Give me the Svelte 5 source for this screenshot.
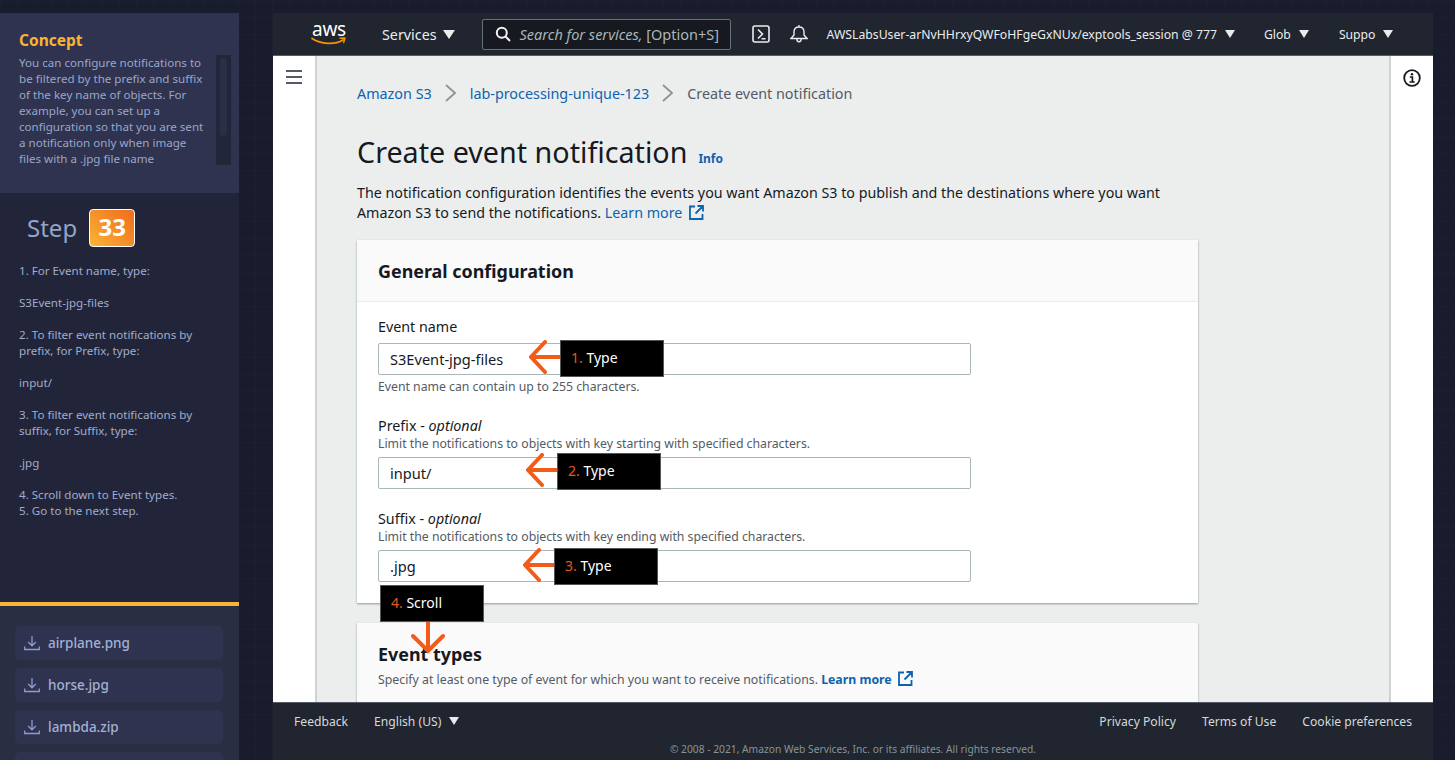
<script>
  const files = ['airplane.png', 'horse.jpg', 'lambda.zip', ''];

  const fields = [
    { label: 'Event name', value: 'S3Event-jpg-files', hint: 'Event name can contain up to 255 characters.' },
    { label: 'Prefix', optional: true, desc: 'Limit the notifications to objects with key starting with specified characters.', value: 'input/' },
    { label: 'Suffix', optional: true, desc: 'Limit the notifications to objects with key ending with specified characters.', value: '.jpg' }
  ];

  // overlay positions are relative to the console body
  const callouts = [
    { n: '1.', text: 'Type', x: 287, y: 284, ax: 256 },
    { n: '2.', text: 'Type', x: 284, y: 397, ax: 253 },
    { n: '3.', text: 'Type', x: 281, y: 492, ax: 250 }
  ];
</script>

<div class="page">
  <aside class="sidebar">
    <section class="concept">
      <h2>Concept</h2>
      <div class="concept-body">
        <p>You can configure notifications to be filtered by the prefix and suffix of the key name of objects. For example, you can set up a configuration so that you are sent a notification only when image files with a .jpg file name</p>
        <div class="scroll"><div class="thumb"></div></div>
      </div>
    </section>

    <section class="step">
      <div class="step-head">
        <span class="step-word">Step</span>
        <span class="badge">33</span>
      </div>
      <p>1. For Event name, type:</p>
      <p>S3Event-jpg-files</p>
      <p>2. To filter event notifications by prefix, for Prefix, type:</p>
      <p>input/</p>
      <p>3. To filter event notifications by suffix, for Suffix, type:</p>
      <p>.jpg</p>
      <p>4. Scroll down to Event types.<br />5. Go to the next step.</p>
    </section>

    <section class="files">
      {#each files as f}
        <div class="file">
          {#if f}
            <svg width="16" height="16" viewBox="0 0 16 16" fill="none" stroke="#8f9bd0" stroke-width="1.3">
              <path d="M8 1v9.5M4.2 7l3.8 3.8L11.8 7M.7 11.5v3h14.6v-3" />
            </svg>
            <span>{f}</span>
          {/if}
        </div>
      {/each}
    </section>
  </aside>

  <div class="console">
    <header class="topbar">
      <div class="logo">
        <span class="aws">aws</span>
        <svg class="smile" width="36" height="9" viewBox="0 0 36 9" fill="none">
          <path d="M1 1.5c9 6 23 6.500 31 1.500" stroke="#f79400" stroke-width="1.800" stroke-linecap="round" />
          <path d="M29 1.300l5-.3-1.300 4.500" stroke="#f79400" stroke-width="1.400" stroke-linecap="round" stroke-linejoin="round" />
        </svg>
      </div>
      <span class="services">Services</span>
      <span class="caret big"></span>
      <div class="search">
        <svg width="16" height="16" viewBox="0 0 16 16" fill="none" stroke="#f2f3f3" stroke-width="2">
          <circle cx="6.800" cy="6.800" r="5" />
          <path d="M10.500 10.500L15 15" />
        </svg>
        <span>Search for services, <b>[Option+S]</b></span>
      </div>
      <svg class="cloudshell" width="18" height="18" viewBox="0 0 18 18" fill="none" stroke="#eaeded" stroke-width="1.600">
        <rect x="1" y="1" width="16" height="16" rx="2" />
        <path d="M6 4.500l4.500 4.500L6 13.500M9.500 13.800H13.500" />
      </svg>
      <svg class="bell" width="18" height="20" viewBox="0 0 18 20" fill="none" stroke="#eaeded" stroke-width="1.400">
        <path d="M1 14.500l3-3.500V8c0-3 2-5 5-5s5 2 5 5v3l3 3.500zM9 1v2M6.800 14.800c0 4 4.400 4 4.400 0" />
      </svg>
      <span class="nav user">AWSLabsUser-arNvHHrxyQWFoHFgeGxNUx/exptools_session @ 777</span>
      <span class="caret"></span>
      <span class="nav glob">Glob</span>
      <span class="caret"></span>
      <span class="nav suppo">Suppo</span>
      <span class="caret"></span>
    </header>

    <div class="body">
      <div class="rail left">
        <div class="burger"><i></i><i></i><i></i></div>
      </div>

      <main class="main">
        <nav class="crumbs">
          <a>Amazon S3</a>
          <svg width="14" height="18" viewBox="0 0 14 18" fill="none" stroke="#879596" stroke-width="1.800"><path d="M2 1l9 8-9 8" /></svg>
          <a>lab-processing-unique-123</a>
          <svg width="14" height="18" viewBox="0 0 14 18" fill="none" stroke="#879596" stroke-width="1.800"><path d="M2 1l9 8-9 8" /></svg>
          <span>Create event notification</span>
        </nav>

        <div class="title">
          <h1>Create event notification</h1>
          <a>Info</a>
        </div>

        <p class="lead">The notification configuration identifies the events you want Amazon S3 to publish and the destinations where you want Amazon S3 to send the notifications. <a>Learn more</a>
          <svg class="ext" width="15" height="15" viewBox="0 0 15 15" fill="none" stroke="#0f62ae" stroke-width="1.800"><path d="M6 1.500H1v12.500h12.500V9M8.500 1h5.500v5.500M14 1L6.500 8.500" /></svg>
        </p>

        <section class="card">
          <div class="card-head"><h2>General configuration</h2></div>
          <div class="card-body">
            {#each fields as f}
              <div class="field">
                <div class="label">{f.label}{#if f.optional}&nbsp;- <em>optional</em>{/if}</div>
                {#if f.desc}<div class="desc">{f.desc}</div>{/if}
                <div class="input">{f.value}</div>
                {#if f.hint}<div class="hint">{f.hint}</div>{/if}
              </div>
            {/each}
          </div>
        </section>

        <section class="card second">
          <div class="card-head">
            <h2>Event types</h2>
            <p>Specify at least one type of event for which you want to receive notifications. <a>Learn more</a>
              <svg class="ext" width="15" height="15" viewBox="0 0 15 15" fill="none" stroke="#0f62ae" stroke-width="1.800"><path d="M6 1.500H1v12.500h12.500V9M8.500 1h5.500v5.500M14 1L6.500 8.500" /></svg>
            </p>
          </div>
        </section>
      </main>

      <div class="rail right">
        <svg width="18" height="18" viewBox="0 0 18 18" fill="none" stroke="#16191f">
          <circle cx="9" cy="9" r="7.800" stroke-width="1.800" />
          <circle cx="9" cy="5.300" r="1.200" fill="#16191f" stroke="none" />
          <path d="M6.800 8h2.600v4.800M6.500 13h5.200" stroke-width="1.700" />
        </svg>
      </div>

      {#each callouts as c}
        <svg class="arrow" style="left:{c.ax}px;top:{c.y}px" width="33" height="34" viewBox="0 0 33 34" fill="none" stroke="#f25c19" stroke-width="4" stroke-linecap="round">
          <path d="M32 17H3M16 2L2 17l14 15" />
        </svg>
        <div class="callout" style="left:{c.x}px;top:{c.y}px"><b>{c.n}</b> {c.text}</div>
      {/each}

      <div class="callout" style="left:107px;top:529px"><b>4.</b> Scroll</div>
      <svg class="arrow" style="left:138px;top:566px" width="34" height="32" viewBox="0 0 34 32" fill="none" stroke="#f25c19" stroke-width="4" stroke-linecap="round">
        <path d="M17 1v28M2 14l15 15 15-15" />
      </svg>
    </div>

    <footer class="footer">
      <div class="foot-row">
        <span>Feedback</span>
        <span class="lang">English (US)</span>
        <span class="caret"></span>
        <span class="spacer"></span>
        <span>Privacy Policy</span>
        <span>Terms of Use</span>
        <span>Cookie preferences</span>
      </div>
      <div class="copy">© 2008 - 2021, Amazon Web Services, Inc. or its affiliates. All rights reserved.</div>
    </footer>
  </div>
</div>

<style>
  :global(body) {
    margin: 0;
    background: #191c2d;
    font-family: 'Noto Sans', 'Open Sans', sans-serif;
  }

  .page {
    display: flex;
    height: 760px;
    overflow: hidden;
    padding-top: 13px;
    box-sizing: border-box;
    background-color: #191c2d;
    background-image:
      linear-gradient(rgba(255, 255, 255, 0.012) 1px, transparent 1px),
      linear-gradient(90deg, rgba(255, 255, 255, 0.012) 1px, transparent 1px);
    background-size: 17px 17px;
  }

  .sidebar {
    width: 239px;
    flex: none;
    margin-right: 34px;
    display: flex;
    flex-direction: column;
    background: #222539;
  }

  .concept {
    flex: none;
    height: 180px;
    box-sizing: border-box;
    padding: 17px 15px 0 19px;
    background: #2f3350;
  }

  .concept h2 {
    margin: 0 0 5px;
    font-size: 15.500px;
    line-height: 20px;
    font-weight: 700;
    color: #fbb335;
  }

  .concept-body {
    display: flex;
    justify-content: space-between;
  }

  .concept p {
    margin: 0;
    width: 189px;
    font-size: 11.600px;
    line-height: 16px;
    color: #9aa6c9;
  }

  .scroll {
    width: 15px;
    height: 110px;
    box-sizing: border-box;
    padding: 3px 4px;
    background: #23263b;
    margin-right: -7px;
  }

  .thumb {
    height: 78px;
    border-radius: 4px;
    background: #2b2e45;
  }

  .step {
    flex: none;
    height: 409px;
    box-sizing: border-box;
    padding: 16px 19px 0;
    color: #a0accd;
  }

  .step-head {
    display: flex;
    align-items: center;
    gap: 12px;
    padding-left: 8px;
    margin-bottom: 16px;
  }

  .step-word {
    font-size: 24px;
    line-height: 38px;
    color: #93a4c9;
  }

  .badge {
    width: 46px;
    height: 38px;
    box-sizing: border-box;
    border: 1.500px solid #fff;
    border-radius: 4px;
    background: linear-gradient(45deg, #fbb335, #f06b1d);
    color: #fff;
    font-size: 24px;
    font-weight: 700;
    line-height: 34px;
    text-align: center;
  }

  .step p {
    margin: 0 0 16px;
    font-size: 11.600px;
    line-height: 16px;
  }

  .files {
    flex: 1;
    border-top: 4px solid #fbb335;
    background: #2a2e42;
    padding: 20px 16px 0 15px;
    display: flex;
    flex-direction: column;
    gap: 8px;
  }

  .file {
    flex: none;
    height: 34px;
    border-radius: 5px;
    background: #2f3350;
    display: flex;
    align-items: center;
    gap: 8px;
    padding-left: 9px;
    color: #a3b1d3;
    font-size: 13.500px;
    font-weight: 500;
  }

  .console {
    width: 1160px;
    flex: none;
    display: flex;
    flex-direction: column;
    overflow: hidden;
  }

  .topbar {
    height: 43px;
    flex: none;
    box-sizing: border-box;
    border-bottom: 1px solid #545b64;
    background: #20252f;
    display: flex;
    align-items: center;
    color: #eaeded;
    font-size: 12px;
  }

  .logo {
    width: 36px;
    margin-left: 38px;
    display: flex;
    flex-direction: column;
    align-items: center;
    line-height: 1;
  }

  .aws {
    font-size: 19px;
    line-height: 15px;
    color: #fff;
    letter-spacing: -0.3px;
  }

  .services {
    margin-left: 35px;
    font-size: 14.300px;
  }

  .caret {
    width: 0;
    height: 0;
    margin-left: 8px;
    border-left: 5px solid transparent;
    border-right: 5px solid transparent;
    border-top: 8px solid #eaeded;
  }

  .caret.big {
    margin-left: 6px;
    border-left-width: 6px;
    border-right-width: 6px;
    border-top-width: 9px;
  }

  .search {
    margin-left: 27px;
    width: 249px;
    height: 31px;
    box-sizing: border-box;
    border: 1px solid #687078;
    border-radius: 2px;
    background: #16191f;
    display: flex;
    align-items: center;
    gap: 9px;
    padding-left: 12px;
    color: #aab7b8;
    font-size: 14.500px;
    white-space: nowrap;
    overflow: hidden;
  }

  .search span {
    font-style: italic;
  }

  .search b {
    font-style: normal;
    font-weight: 400;
  }

  .cloudshell {
    margin-left: 21px;
  }

  .bell {
    margin-left: 20px;
  }

  .nav {
    white-space: nowrap;
    font-size: 12.200px;
  }

  .user {
    margin-left: 19px;
    font-size: 12.240px;
  }

  .glob {
    margin-left: 29px;
  }

  .suppo {
    margin-left: 30px;
  }

  .body {
    flex: 1;
    min-height: 0;
    position: relative;
    display: flex;
    background: #fff;
    overflow: hidden;
  }

  .rail {
    flex: none;
    display: flex;
    background: #fff;
  }

  .rail.left {
    width: 44px;
    padding-left: 13px;
    box-sizing: border-box;
    border-right: 2px solid #d0d3d3;
  }

  .rail.right {
    width: 42px;
    justify-content: center;
    padding-top: 13px;
    border-left: 2px solid #d0d3d3;
  }

  .burger {
    margin-top: 14px;
    width: 16px;
    height: 14px;
    display: flex;
    flex-direction: column;
    justify-content: space-between;
  }

  .burger i {
    display: block;
    height: 2px;
    background: #545b64;
  }

  .main {
    flex: 1;
    min-width: 0;
    box-sizing: border-box;
    padding: 27px 0 0 40px;
    background: #eceeee;
    color: #16191f;
    overflow: hidden;
  }

  a {
    color: #0f62ae;
  }

  .crumbs {
    display: flex;
    align-items: center;
    height: 20px;
    font-size: 14.350px;
    gap: 12px;
    color: #545b64;
    white-space: nowrap;
  }

  .title {
    margin-top: 29px;
    display: flex;
    align-items: baseline;
    gap: 11px;
  }

  .title h1 {
    margin: 0;
    font-size: 28.700px;
    line-height: 40px;
    font-weight: 400;
    color: #16191f;
  }

  .title a {
    font-size: 12px;
    font-weight: 700;
  }

  .lead {
    margin: 11px 0 0;
    width: 841px;
    font-size: 14.270px;
    line-height: 20px;
  }

  .ext {
    margin-left: 3px;
    vertical-align: -2px;
  }

  .card {
    width: 841px;
    margin-top: 17px;
    background: #fff;
    box-shadow: 0 1px 2px rgba(0, 28, 36, 0.4);
  }

  .card-head {
    height: 62px;
    box-sizing: border-box;
    padding: 20px 21px 0;
    background: #fafafa;
    border-bottom: 1px solid #eaeded;
  }

  .card h2 {
    margin: 0;
    font-size: 17.900px;
    line-height: 23px;
    font-weight: 700;
  }

  .card-body {
    padding: 15px 21px 0;
    height: 301px;
    box-sizing: border-box;
  }

  .field {
    margin-bottom: 20px;
    width: 593px;
  }

  .label {
    font-size: 14.300px;
    line-height: 20px;
  }

  .desc, .hint {
    font-size: 12.250px;
    line-height: 16px;
    color: #545b64;
  }

  .input {
    margin-top: 6px;
    height: 32px;
    box-sizing: border-box;
    border: 1px solid #aab7b8;
    border-radius: 2px;
    background: #fff;
    padding-left: 11px;
    font-size: 14.600px;
    line-height: 30px;
  }

  .desc + .input {
    margin-top: 5px;
  }

  .hint {
    margin-top: 4px;
    padding-bottom: 1px;
  }

  .second {
    margin-top: 20px;
  }

  .second .card-head {
    height: 100px;
    padding-top: 20px;
  }

  .second p {
    margin: 5px 0 0;
    font-size: 12.300px;
    line-height: 18px;
    color: #545b64;
  }

  .second a {
    font-weight: 700;
  }

  .callout {
    position: absolute;
    width: 104px;
    height: 37px;
    box-sizing: border-box;
    background: #000;
    border: 1px solid #555;
    color: #fff;
    font-size: 14px;
    line-height: 34px;
    padding-left: 10px;
    white-space: nowrap;
  }

  .callout b {
    font-weight: 400;
    color: #e8591a;
  }

  .arrow {
    position: absolute;
  }

  .footer {
    height: 58px;
    flex: none;
    box-sizing: border-box;
    border-top: 1px solid #545b64;
    background: #20252f;
    color: #d5dbdb;
  }

  .foot-row {
    display: flex;
    align-items: center;
    gap: 26px;
    height: 36px;
    padding: 0 21px;
    font-size: 12.150px;
  }

  .foot-row .caret {
    margin-left: -18px;
  }

  .spacer {
    flex: 1;
  }

  .copy {
    margin-top: 3px;
    text-align: center;
    font-size: 10.250px;
    color: #879596;
  }
</style>
